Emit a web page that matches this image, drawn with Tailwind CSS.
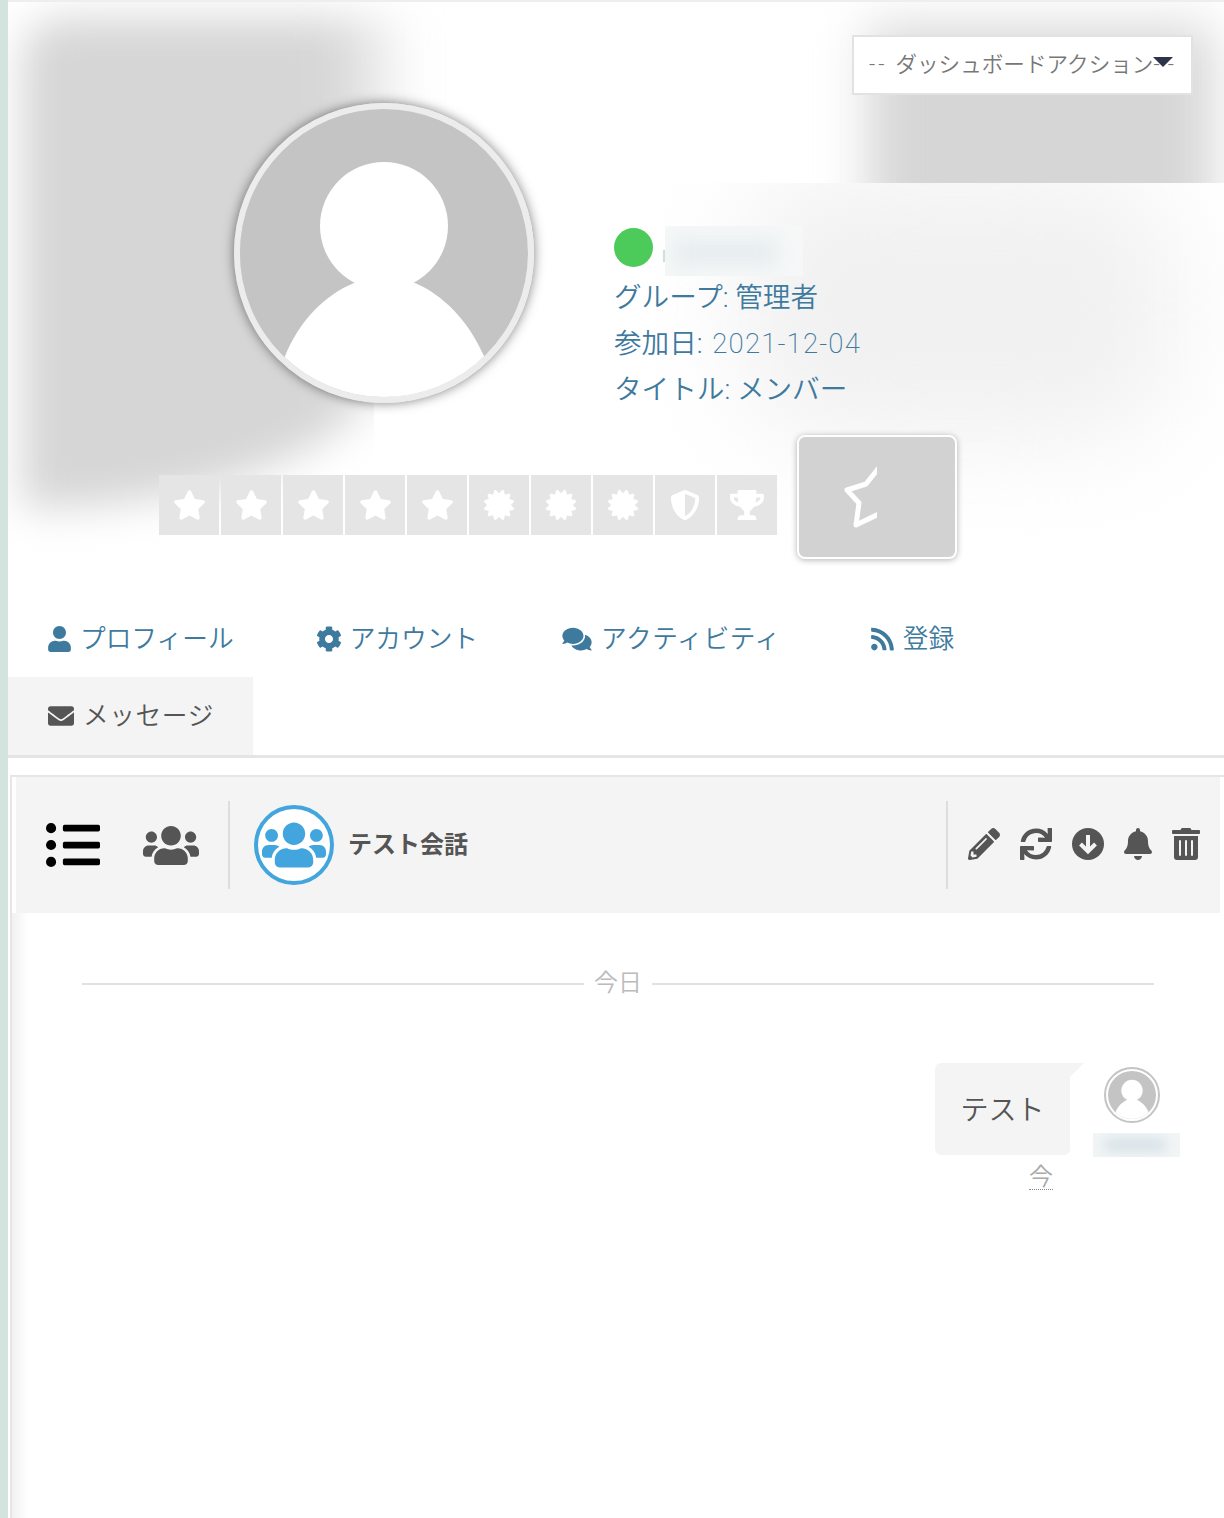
<!DOCTYPE html>
<html lang="ja">
<head>
  <meta charset="UTF-8" />
  <title>プロフィール</title>
  <script src="https://cdn.jsdelivr.net/npm/@tailwindcss/browser@4"></script>
</head>
<body class="bg-white font-['Roboto','Noto_Sans_CJK_JP',sans-serif] font-[350]">
  <!-- icon sprite -->
  <svg class="hidden">
    <symbol id="i-star" viewBox="0 0 576 512"><path d="M259.3 17.8L194 150.2 47.9 171.5c-26.2 3.8-36.7 36.1-17.7 54.6l105.7 103-25 145.5c-4.5 26.3 23.2 46 46.4 33.7L288 439.6l130.7 68.7c23.2 12.2 50.9-7.4 46.4-33.7l-25-145.5 105.7-103c19-18.5 8.5-50.8-17.7-54.6L382 150.2 316.7 17.8c-11.7-23.6-45.6-23.9-57.4 0z"/></symbol>
    <symbol id="i-cert" viewBox="0 0 512 512"><path d="M458.622 255.92l45.985-45.005c13.708-12.977 7.316-36.039-10.664-40.339l-62.65-15.99 17.661-62.015c4.991-17.838-11.829-34.663-29.661-29.671l-61.994 17.667-15.984-62.671C337.085.197 313.765-6.276 300.99 7.228L256 53.57 211.011 7.229c-12.63-13.351-36.047-7.234-40.325 10.668l-15.984 62.671-61.995-17.667C74.87 57.907 58.056 74.738 63.046 92.572l17.661 62.015-62.65 15.99C.069 174.878-6.31 197.944 7.392 210.915l45.985 45.005-45.985 45.004c-13.708 12.977-7.316 36.039 10.664 40.339l62.65 15.99-17.661 62.015c-4.991 17.838 11.829 34.663 29.661 29.671l61.994-17.667 15.984 62.671c4.439 18.575 27.696 24.018 40.325 10.668L256 458.61l44.989 46.001c12.5 13.488 35.987 7.486 40.325-10.668l15.984-62.671 61.994 17.667c17.836 4.994 34.651-11.837 29.661-29.671l-17.661-62.015 62.65-15.99c17.987-4.302 24.366-27.367 10.664-40.339l-45.984-45.004z"/></symbol>
    <symbol id="i-users" viewBox="0 0 640 512"><path d="M96 224c35.3 0 64-28.7 64-64s-28.7-64-64-64-64 28.7-64 64 28.7 64 64 64zm448 0c35.3 0 64-28.7 64-64s-28.7-64-64-64-64 28.7-64 64 28.7 64 64 64zm32 32h-64c-17.6 0-33.5 7.1-45.1 18.6 40.3 22.1 68.9 62 75.1 109.4h66c17.7 0 32-14.3 32-32v-32c0-35.3-28.7-64-64-64zm-256 0c61.9 0 112-50.1 112-112S381.9 32 320 32 208 82.1 208 144s50.1 112 112 112zm76.8 32h-8.3c-20.8 10-43.9 16-68.5 16s-47.6-6-68.5-16h-8.3C179.6 288 128 339.6 128 403.2V432c0 26.5 21.5 48 48 48h288c26.5 0 48-21.5 48-48v-28.8c0-63.6-51.6-115.2-115.2-115.2zm-223.7-13.4C161.5 263.1 145.6 256 128 256H64c-35.3 0-64 28.7-64 64v32c0 17.7 14.3 32 32 32h65.9c6.3-47.4 34.9-87.3 75.2-109.4z"/></symbol>
    <symbol id="i-avatar" viewBox="0 0 288 288"><rect width="288" height="288" fill="#c4c4c4"/><circle cx="144" cy="117" r="64" fill="#fff"/><path fill="#fff" d="M45 247C60 211 85 186 114 174Q144 160 175 174C203 186 228 211 244 247L244 288L45 288Z"/></symbol>
  </svg>

  <div class="flex min-h-[1518px]">
    <div class="w-2 shrink-0 bg-[#d3e3dd]"></div>

    <main class="flex-1 min-w-0">
      <!-- profile header with blurred cover -->
      <section class="relative h-[600px] border-t-2 border-[#eeeeee] overflow-hidden">
        <div class="absolute left-[290px] right-0 top-[181px] h-[360px] overflow-hidden">
          <div class="w-[440px] h-[270px] ml-[440px] -mt-[10px] bg-[#f1f1f1] blur-[50px] rounded-[100px]"></div>
        </div>
        <div class="absolute left-0 top-0 w-[480px] h-[598px] overflow-hidden [clip-path:polygon(0_0,100%_0,100%_380px,366px_380px,366px_100%,0_100%)]">
          <div class="w-[395px] h-[490px] mt-4 ml-[14px] bg-[linear-gradient(90deg,#d6d6d6_78%,transparent)] blur-[20px] rounded-tl-[40px] rounded-br-[380px_200px]"></div>
        </div>
        <div class="absolute left-[770px] right-0 top-0 h-[181px] overflow-hidden">
          <div class="w-[345px] h-[260px] ml-[90px] mt-[24px] bg-[#d6d6d6] blur-[25px]"></div>
        </div>

        <div class="relative">
          <div class="flex justify-end pr-[31px] pt-[33px]">
            <div class="relative w-[341px] h-[60px] bg-white border-2 border-[#e2e2e2] pl-[15px] flex items-center text-[21.6px] text-[#777777] whitespace-nowrap">
              <span class="tracking-[3px] mr-2">--</span>ダッシュボードアクション<span class="tracking-[8px]">--</span>
              <span class="absolute left-[299px] top-[20px] w-0 h-0 border-x-[10px] border-x-transparent border-t-[10px] border-t-[#2d3348]"></span>
            </div>
          </div>

          <div class="flex pl-[226px] mt-2">
            <div class="w-[300px] h-[300px] rounded-full border-[6px] border-[#ececec] overflow-hidden shadow-[0_0_12px_rgba(0,0,0,0.5)] shrink-0">
              <svg class="w-full h-full block"><use href="#i-avatar"/></svg>
            </div>
            <div class="ml-20 pt-[123px] text-[27.6px] leading-[46px] text-[#3e7a9e]">
              <div class="flex items-start h-[49px]">
                <span class="w-[39px] h-[39px] mt-[2px] rounded-full bg-[#4ccb5b]"></span>
                <span class="ml-[10px] w-[2px] h-[12px] mt-[24px] bg-[#cfe0d6]"></span>
                <div class="w-[138px] h-[50px] bg-[#f6f8f8] overflow-hidden">
                  <div class="w-[105px] h-[26px] mt-[14px] ml-[8px] bg-[#e6ecee] blur-[10px]"></div>
                </div>
              </div>
              <div>グループ: 管理者</div>
              <div>参加日: <span class="ml-[3px] font-extralight tracking-[1.1px]">2021-12-04</span></div>
              <div>タイトル: メンバー</div>
            </div>
          </div>

          <!-- rank badges -->
          <div class="flex items-start pl-[151px] mt-[22px]">
            <div class="flex gap-[2px] mt-10 text-white">
              <div class="w-[60px] h-[60px] bg-[#e5e5e5] flex items-center justify-center"><svg class="w-[33px] h-[30px] fill-current"><use href="#i-star"/></svg></div>
              <div class="w-[60px] h-[60px] bg-[#e5e5e5] flex items-center justify-center"><svg class="w-[33px] h-[30px] fill-current"><use href="#i-star"/></svg></div>
              <div class="w-[60px] h-[60px] bg-[#e5e5e5] flex items-center justify-center"><svg class="w-[33px] h-[30px] fill-current"><use href="#i-star"/></svg></div>
              <div class="w-[60px] h-[60px] bg-[#e5e5e5] flex items-center justify-center"><svg class="w-[33px] h-[30px] fill-current"><use href="#i-star"/></svg></div>
              <div class="w-[60px] h-[60px] bg-[#e5e5e5] flex items-center justify-center"><svg class="w-[33px] h-[30px] fill-current"><use href="#i-star"/></svg></div>
              <div class="w-[60px] h-[60px] bg-[#e5e5e5] flex items-center justify-center"><svg class="w-[30px] h-[30px] fill-current"><use href="#i-cert"/></svg></div>
              <div class="w-[60px] h-[60px] bg-[#e5e5e5] flex items-center justify-center"><svg class="w-[30px] h-[30px] fill-current"><use href="#i-cert"/></svg></div>
              <div class="w-[60px] h-[60px] bg-[#e5e5e5] flex items-center justify-center"><svg class="w-[30px] h-[30px] fill-current"><use href="#i-cert"/></svg></div>
              <div class="w-[60px] h-[60px] bg-[#e5e5e5] flex items-center justify-center">
                <svg class="w-[30px] h-[30px] fill-current" viewBox="0 0 512 512"><path d="M466.5 83.7l-192-80a48.15 48.15 0 0 0-36.9 0l-192 80C27.7 91.1 16 108.6 16 128c0 198.5 114.5 335.7 221.5 380.3 11.8 4.9 25.1 4.9 36.9 0C360.1 472.6 496 349.3 496 128c0-19.4-11.7-36.9-29.5-44.3zM256.1 446.3l-.1-381 175.9 73.3c-3.3 151.4-82.1 261.1-175.8 307.7z"/></svg>
              </div>
              <div class="w-[60px] h-[60px] bg-[#e5e5e5] flex items-center justify-center">
                <svg class="w-[34px] h-[30px] fill-current" viewBox="0 0 576 512"><path d="M552 64H448V24c0-13.3-10.7-24-24-24H152c-13.3 0-24 10.7-24 24v40H24C10.7 64 0 74.7 0 88v56c0 35.7 22.5 72.4 61.9 100.7 31.5 22.7 69.8 37.1 110 41.7C203.3 338.5 240 360 240 360v72h-48c-35.3 0-64 20.7-64 56v12c0 6.6 5.4 12 12 12h296c6.6 0 12-5.4 12-12v-12c0-35.3-28.7-56-64-56h-48v-72s36.7-21.5 68.1-73.6c40.3-4.6 78.6-19 110-41.7 39.3-28.3 61.9-65 61.9-100.7V88c0-13.3-10.7-24-24-24zM99.3 192.8C74.9 175.2 64 155.6 64 144v-16h64.2c1 32.6 5.8 61.2 12.8 86.2-15.1-5.2-29.2-12.4-41.7-21.4zM512 144c0 16.1-17.7 36.1-35.3 48.8-12.5 9-26.7 16.2-41.8 21.4 7-25 11.8-53.6 12.8-86.2H512v16z"/></svg>
              </div>
            </div>
            <div class="ml-5 w-40 h-[124px] rounded-lg border-2 border-white bg-[#d2d2d2] shadow-[0_1px_6px_rgba(0,0,0,0.3)]">
              <svg class="w-[78px] h-[120px]" viewBox="0 0 78 120" fill="none" stroke="#ffffff" stroke-width="5" stroke-linejoin="round"><path d="M83 27L67 47L48 53L60 66L57 88L84 75"/></svg>
            </div>
          </div>
        </div>
      </section>

      <!-- tabs -->
      <nav class="flex flex-wrap gap-x-1 border-b-[3px] border-[#e5e5e5] text-[25.7px] text-[#3e7a9e]">
        <a class="h-[77px] pl-10 pr-[38px] flex items-center gap-[9px]">
          <svg class="w-[23px] h-[26px] fill-current" viewBox="0 0 448 512"><path d="M224 256c70.7 0 128-57.3 128-128S294.7 0 224 0 96 57.3 96 128s57.3 128 128 128zm89.6 32h-16.7c-22.2 10.2-46.9 16-72.9 16s-50.6-5.8-72.9-16h-16.7C60.2 288 0 348.2 0 422.4V464c0 26.5 21.5 48 48 48h352c26.5 0 48-21.5 48-48v-41.6c0-74.2-60.2-134.4-134.4-134.4z"/></svg>
          <span class="mt-[2px]">プロフィール</span>
        </a>
        <a class="h-[77px] pl-10 pr-10 flex items-center gap-2">
          <svg class="w-[26px] h-[26px] fill-current" viewBox="0 0 512 512"><path d="M487.4 315.7l-42.6-24.6c4.3-23.2 4.3-47 0-70.2l42.6-24.6c4.9-2.8 7.1-8.6 5.5-14-11.1-35.6-30-67.8-54.7-94.6-3.8-4.1-10-5.1-14.8-2.3L380.8 110c-17.9-15.4-38.5-27.3-60.8-35.1V25.8c0-5.6-3.9-10.5-9.4-11.7-36.7-8.2-74.3-7.8-109.2 0-5.5 1.2-9.4 6.1-9.4 11.7V75c-22.2 7.9-42.8 19.8-60.8 35.1L88.7 85.5c-4.9-2.8-11-1.9-14.8 2.3-24.7 26.7-43.6 58.9-54.7 94.6-1.7 5.4.6 11.2 5.5 14L67.3 221c-4.3 23.2-4.3 47 0 70.2l-42.6 24.6c-4.9 2.8-7.1 8.6-5.5 14 11.1 35.6 30 67.8 54.7 94.6 3.8 4.1 10 5.1 14.8 2.3l42.6-24.6c17.9 15.4 38.5 27.3 60.8 35.1v49.2c0 5.6 3.9 10.5 9.4 11.7 36.7 8.2 74.3 7.8 109.2 0 5.5-1.2 9.4-6.1 9.4-11.7v-49.2c22.2-7.9 42.8-19.8 60.8-35.1l42.6 24.6c4.9 2.8 11 1.9 14.8-2.3 24.7-26.7 43.6-58.9 54.7-94.6 1.5-5.5-.7-11.3-5.6-14.1zM256 336c-44.1 0-80-35.9-80-80s35.9-80 80-80 80 35.9 80 80-35.9 80-80 80z"/></svg>
          <span class="mt-[2px]">アカウント</span>
        </a>
        <a class="h-[77px] pl-10 pr-[46px] flex items-center gap-[9px]">
          <svg class="w-[30px] h-[26px] fill-current" viewBox="0 0 576 512"><path d="M416 192c0-88.4-93.1-160-208-160S0 103.6 0 192c0 34.3 14.1 65.9 38 92-13.4 30.2-35.5 54.2-35.8 54.5-2.2 2.3-2.8 5.7-1.5 8.7S4.8 352 8 352c36.6 0 66.9-12.3 88.7-25 32.2 15.7 70.3 25 111.3 25 114.9 0 208-71.6 208-160zm122 220c23.9-26 38-57.7 38-92 0-66.9-53.5-124.2-129.3-148.1.9 6.6 1.3 13.3 1.3 20.1 0 105.9-107.7 192-240 192-10.8 0-21.3-.8-31.7-1.9C207.8 439.6 281.8 480 368 480c41 0 79.1-9.2 111.3-25 21.8 12.7 52.1 25 88.7 25 3.2 0 6.1-1.9 7.3-4.8 1.3-2.9.7-6.3-1.5-8.7-.3-.3-22.4-24.2-35.8-54.5z"/></svg>
          <span class="mt-[2px] tracking-[0.6px]">アクティビティ</span>
        </a>
        <a class="h-[77px] px-10 flex items-center gap-[9px]">
          <svg class="w-[23px] h-[26px] fill-current" viewBox="0 0 448 512"><path d="M128.081 415.959c0 35.369-28.672 64.041-64.041 64.041S0 451.328 0 415.959s28.672-64.041 64.041-64.041 64.04 28.673 64.04 64.041zm175.66 47.25c-8.354-154.6-132.185-278.587-286.95-286.95C7.656 175.765 0 183.105 0 192.253v48.069c0 8.415 6.49 15.472 14.887 16.018 111.832 7.284 201.473 96.702 208.772 208.772.547 8.397 7.604 14.887 16.018 14.887h48.069c9.149.001 16.489-7.655 15.995-16.79zm144.249.288C439.596 229.677 251.465 40.445 16.503 32.01 7.473 31.686 0 38.981 0 48.016v48.068c0 8.625 6.835 15.645 15.453 15.999 191.179 7.839 344.627 161.316 352.465 352.465.353 8.618 7.373 15.453 15.999 15.453h48.068c9.034-.001 16.329-7.474 16.005-16.504z"/></svg>
          <span class="mt-[2px]">登録</span>
        </a>
        <a class="h-[78px] w-[245px] pl-10 flex items-center gap-[9px] bg-[#f4f4f4] text-[#555555]">
          <svg class="w-[26px] h-[26px] fill-current" viewBox="0 0 512 512"><path d="M502.3 190.8c3.9-3.1 9.7-.2 9.7 4.7V400c0 26.5-21.5 48-48 48H48c-26.5 0-48-21.5-48-48V195.6c0-5 5.7-7.8 9.7-4.7 22.4 17.4 52.1 39.5 154.1 113.6 21.1 15.4 56.7 47.8 92.2 47.6 35.7.3 72-32.8 92.3-47.6 102-74.1 131.6-96.3 154-113.7zM256 320c23.2.4 56.6-29.2 73.4-41.4 132.7-96.3 142.8-104.7 173.4-128.7 5.8-4.5 9.2-11.5 9.2-18.9v-19c0-26.5-21.5-48-48-48H48C21.5 64 0 85.5 0 112v19c0 7.4 3.4 14.3 9.2 18.9 30.6 23.9 40.7 32.4 173.4 128.7 16.8 12.2 50.2 41.8 73.4 41.4z"/></svg>
          <span class="tracking-[0.6px]">メッセージ</span>
        </a>
      </nav>

      <!-- conversation -->
      <section class="mt-[17px] ml-[2px] h-[743px] flex flex-col border-t-2 border-l-2 border-[#e6e6e6]">
        <div class="ml-1 mr-1 h-[136px] shrink-0 bg-[#f4f4f4] flex items-center text-[#555555]">
          <svg class="ml-[30px] w-[54px] h-[54px] fill-black shrink-0" viewBox="0 0 512 512"><path d="M48 48a48 48 0 1 0 48 48 48 48 0 0 0-48-48zm0 160a48 48 0 1 0 48 48 48 48 0 0 0-48-48zm0 160a48 48 0 1 0 48 48 48 48 0 0 0-48-48zm448 16H176a16 16 0 0 0-16 16v32a16 16 0 0 0 16 16h320a16 16 0 0 0 16-16v-32a16 16 0 0 0-16-16zm0-320H176a16 16 0 0 0-16 16v32a16 16 0 0 0 16 16h320a16 16 0 0 0 16-16V80a16 16 0 0 0-16-16zm0 160H176a16 16 0 0 0-16 16v32a16 16 0 0 0 16 16h320a16 16 0 0 0 16-16v-32a16 16 0 0 0-16-16z"/></svg>
          <svg class="ml-[43px] w-14 h-[45px] fill-current shrink-0"><use href="#i-users"/></svg>
          <div class="ml-[29px] w-[2px] h-[88px] bg-[#dddddd]"></div>
          <div class="ml-[24px] w-20 h-20 rounded-full border-4 border-[#42a5de] bg-white flex items-center justify-center text-[#42a5de]">
            <svg class="w-[64px] h-[52px] fill-current"><use href="#i-users"/></svg>
          </div>
          <span class="ml-[14px] text-[24px] font-semibold">テスト会話</span>
          <div class="ml-auto w-[2px] h-[88px] bg-[#dddddd]"></div>
          <div class="flex gap-5 ml-5 mr-5 mb-[2px]">
            <svg class="w-8 h-8 fill-current" viewBox="0 0 512 512"><path d="M497.9 142.1l-46.1 46.1c-4.7 4.7-12.3 4.7-17 0l-111-111c-4.7-4.7-4.7-12.3 0-17l46.1-46.1c18.7-18.7 49.1-18.7 67.9 0l60.1 60.1c18.8 18.7 18.8 49.1 0 67.9zM284.2 99.8L21.6 362.4.4 483.9c-2.9 16.4 11.4 30.6 27.8 27.8l121.5-21.3 262.6-262.6c4.7-4.7 4.7-12.3 0-17l-111-111c-4.8-4.7-12.4-4.7-17.1 0zM124.1 339.9c-5.5-5.5-5.5-14.3 0-19.8l154-154c5.5-5.5 14.3-5.5 19.8 0s5.5 14.3 0 19.8l-154 154c-5.5 5.5-14.3 5.5-19.8 0zM88 424h48v36.3l-64.5 11.3-31.1-31.1L51.7 376H88v48z"/></svg>
            <svg class="w-8 h-8 fill-current" viewBox="0 0 512 512"><path d="M440.65 12.57l4 82.77A247.16 247.16 0 0 0 255.83 8C134.73 8 33.91 94.92 12.29 209.82A12 12 0 0 0 24.09 224h49.05a12 12 0 0 0 11.67-9.26 175.91 175.91 0 0 1 317-56.94l-101.46-4.86a12 12 0 0 0-12.57 12v47.41a12 12 0 0 0 12 12H500a12 12 0 0 0 12-12V12a12 12 0 0 0-12-12h-47.37a12 12 0 0 0-11.98 12.57zM255.83 432a175.61 175.61 0 0 1-146-77.8l101.8 4.87a12 12 0 0 0 12.57-12v-47.4a12 12 0 0 0-12-12H12a12 12 0 0 0-12 12V500a12 12 0 0 0 12 12h47.35a12 12 0 0 0 12-12.6l-4.15-82.57A247.17 247.17 0 0 0 255.83 504c121.11 0 221.93-86.92 243.55-201.82a12 12 0 0 0-11.8-14.18h-49.05a12 12 0 0 0-11.67 9.26A175.86 175.86 0 0 1 255.83 432z"/></svg>
            <svg class="w-8 h-8" viewBox="0 0 32 32"><circle cx="16" cy="16" r="16" fill="currentColor"/><path d="M16 7V23M8.5 16L16 23.5L23.5 16" fill="none" stroke="#f4f4f4" stroke-width="4"/></svg>
            <svg class="w-7 h-8 fill-current" viewBox="0 0 448 512"><path d="M224 512c35.32 0 63.97-28.65 63.97-64H160.03c0 35.35 28.65 64 63.97 64zm215.39-149.71c-19.32-20.76-55.47-51.99-55.47-154.29 0-77.7-54.48-139.9-127.94-155.16V32c0-17.67-14.32-32-31.98-32s-31.98 14.33-31.98 32v20.84C118.56 68.1 64.08 130.3 64.08 208c0 102.3-36.15 133.53-55.47 154.29-6 6.45-8.66 14.16-8.61 21.71.11 16.4 12.98 32 32.1 32h383.8c19.12 0 32-15.6 32.1-32 .05-7.55-2.61-15.27-8.61-21.71z"/></svg>
            <svg class="w-7 h-8 fill-current" viewBox="0 0 448 512"><path d="M32 464a48 48 0 0 0 48 48h288a48 48 0 0 0 48-48V128H32zm272-256a16 16 0 0 1 32 0v224a16 16 0 0 1-32 0zm-96 0a16 16 0 0 1 32 0v224a16 16 0 0 1-32 0zm-96 0a16 16 0 0 1 32 0v224a16 16 0 0 1-32 0zM432 32H312l-9.4-18.7A24 24 0 0 0 281.1 0H166.8a23.72 23.72 0 0 0-21.4 13.3L136 32H16A16 16 0 0 0 0 48v32a16 16 0 0 0 16 16h416a16 16 0 0 0 16-16V48a16 16 0 0 0-16-16z"/></svg>
          </div>
        </div>

        <div class="flex-1 bg-[linear-gradient(90deg,#f1f1f1,#ffffff_16px)] pt-[53px]">
          <div class="ml-[70px] mr-[70px] flex items-center gap-[10px] text-[24px] text-[#bbbbbb] leading-[34px]">
            <div class="flex-1 h-[2px] bg-[#e2e2e2]"></div>
            <span class="mb-[2px]">今日</span>
            <div class="flex-1 h-[2px] bg-[#e2e2e2]"></div>
          </div>

          <div class="mt-[61px] pr-11 flex justify-end gap-[23px]">
            <div class="flex flex-col items-end">
              <div class="relative w-[135px] h-[92px] pt-1 bg-[#f4f4f4] rounded-md rounded-tr-none flex items-center justify-center text-[28px] text-[#555555]">
                テスト
                <span class="absolute left-full top-0 w-0 h-0 border-t-[14px] border-t-[#f4f4f4] border-r-[14px] border-r-transparent"></span>
              </div>
              <span class="mt-[10px] mr-[17px] text-[24px] leading-[24px] text-[#aaaaaa] border-b border-dotted border-[#888888]">今</span>
            </div>
            <div class="w-[87px]">
              <div class="ml-[11px] mt-1 w-14 h-14 rounded-full border-2 border-[#c4c4c4] overflow-hidden bg-white">
                <svg class="w-full h-full block p-[2px] rounded-full"><use href="#i-avatar"/></svg>
              </div>
              <div class="mt-[10px] w-[87px] h-6 bg-[#f1f5f6] overflow-hidden">
                <div class="w-[60px] h-3 mt-[6px] ml-[12px] bg-[#d5e0e6] blur-[6px]"></div>
              </div>
            </div>
          </div>
        </div>
      </section>
    </main>
  </div>
</body>
</html>
